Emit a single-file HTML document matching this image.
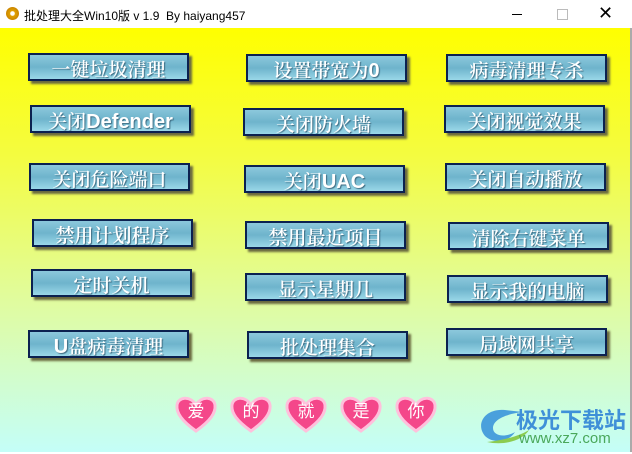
<!DOCTYPE html><html><head><meta charset="utf-8"><style>
body{margin:0;width:632px;height:454px;overflow:hidden;font-family:"Liberation Sans","Noto Sans CJK SC",sans-serif;background:#fff}
.title{position:absolute;left:0;top:0;width:632px;height:28px;background:#fff;font-size:12px}
.title span{position:absolute;left:24px;top:7px;color:#000}
.ic{position:absolute;left:6px;top:7px;width:13px;height:13px;border-radius:50%;background:radial-gradient(circle,#fff 20%,#e0a000 30%,#c07800 90%)}
.c{position:absolute;left:0;top:28px;width:630px;height:424px;background:linear-gradient(#ffff00 0%,#f4fc40 30%,#e0fca0 65%,#c4fef8 100%);border-right:2px solid #aaa}
.b{position:absolute;width:157px;height:24px;border:2px solid #0b2150;box-shadow:3px 3px 2px #6a6a40;background:linear-gradient(#8cc8dc,#6eb4cc 50%,#9ad8e8);color:#fff;font-family:"Noto Serif CJK SC","Liberation Serif",serif;font-weight:600;font-size:19px;line-height:28px;text-align:center;text-shadow:1px 1px 1px #3c6a80;overflow:hidden}
.b b{font-family:"Liberation Sans",sans-serif;font-size:20px}
.h{position:absolute;top:393px;width:44px;height:40px;color:#fff;font-size:17px;text-align:center;line-height:38px}
.h svg{position:absolute;left:0;top:0}
.h i{position:relative;font-style:normal}
</style></head><body>
<div class="title"><div class="ic"></div><span>批处理大全Win10版 v 1.9&nbsp; By haiyang457</span>
<div style="position:absolute;left:512px;top:14px;width:10px;height:1px;background:#000"></div>
<div style="position:absolute;left:557px;top:9px;width:9px;height:9px;border:1px solid #bbb"></div>
<div style="position:absolute;left:598px;top:3px;font-size:18px;font-weight:300">✕</div></div>
<div class="c"></div>
<div class="b" style="left:28px;top:53px">一键垃圾清理</div>
<div class="b" style="left:246px;top:54px">设置带宽为<b>0</b></div>
<div class="b" style="left:446px;top:54px">病毒清理专杀</div>
<div class="b" style="left:30px;top:105px">关闭<b>Defender</b></div>
<div class="b" style="left:243px;top:108px">关闭防火墙</div>
<div class="b" style="left:444px;top:105px">关闭视觉效果</div>
<div class="b" style="left:29px;top:163px">关闭危险端口</div>
<div class="b" style="left:244px;top:165px">关闭<b>UAC</b></div>
<div class="b" style="left:445px;top:163px">关闭自动播放</div>
<div class="b" style="left:32px;top:219px">禁用计划程序</div>
<div class="b" style="left:245px;top:221px">禁用最近项目</div>
<div class="b" style="left:448px;top:222px">清除右键菜单</div>
<div class="b" style="left:31px;top:269px">定时关机</div>
<div class="b" style="left:245px;top:273px">显示星期几</div>
<div class="b" style="left:447px;top:275px">显示我的电脑</div>
<div class="b" style="left:28px;top:330px"><b>U</b>盘病毒清理</div>
<div class="b" style="left:247px;top:331px">批处理集合</div>
<div class="b" style="left:446px;top:328px">局域网共享</div>
<div class="h" style="left:174px"><svg width="44" height="40"><path d="M22 38 C8 28 2 20 3 12 C4 4 16 2 22 12 C28 2 40 4 41 12 C42 20 36 28 22 38Z" fill="#f4478a" stroke="#ffc0dc" stroke-width="3"/></svg><i>爱</i></div>
<div class="h" style="left:229px"><svg width="44" height="40"><path d="M22 38 C8 28 2 20 3 12 C4 4 16 2 22 12 C28 2 40 4 41 12 C42 20 36 28 22 38Z" fill="#f4478a" stroke="#ffc0dc" stroke-width="3"/></svg><i>的</i></div>
<div class="h" style="left:284px"><svg width="44" height="40"><path d="M22 38 C8 28 2 20 3 12 C4 4 16 2 22 12 C28 2 40 4 41 12 C42 20 36 28 22 38Z" fill="#f4478a" stroke="#ffc0dc" stroke-width="3"/></svg><i>就</i></div>
<div class="h" style="left:339px"><svg width="44" height="40"><path d="M22 38 C8 28 2 20 3 12 C4 4 16 2 22 12 C28 2 40 4 41 12 C42 20 36 28 22 38Z" fill="#f4478a" stroke="#ffc0dc" stroke-width="3"/></svg><i>是</i></div>
<div class="h" style="left:394px"><svg width="44" height="40"><path d="M22 38 C8 28 2 20 3 12 C4 4 16 2 22 12 C28 2 40 4 41 12 C42 20 36 28 22 38Z" fill="#f4478a" stroke="#ffc0dc" stroke-width="3"/></svg><i>你</i></div>
<svg style="position:absolute;left:475px;top:402px" width="60" height="45"><path d="M30 8 C10 6 0 22 10 34 C18 42 34 40 40 30 C30 36 18 34 18 26 C18 18 30 12 48 10Z" fill="#4aa0dc"/><path d="M12 40 C30 44 48 38 54 28 C44 34 30 38 12 40Z" fill="#8ccc50"/></svg>
<div style="position:absolute;left:516px;top:403px;font-size:22px;font-weight:bold;color:#3f90d8">极光下载站</div>
<div style="position:absolute;left:519px;top:430px;font-size:15px;color:#4aa85a">www.xz7.com</div>
</body></html>
